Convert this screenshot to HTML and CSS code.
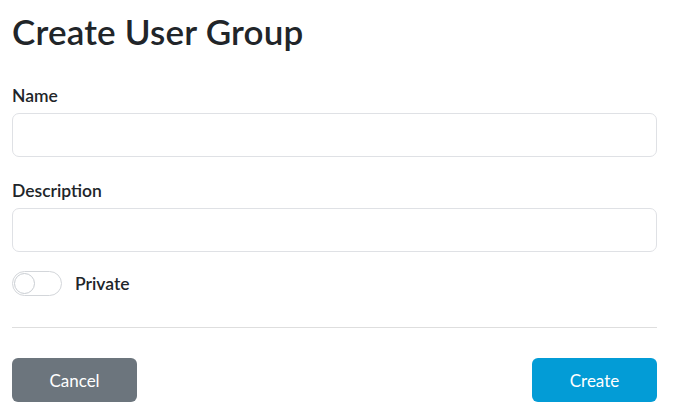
FILE: index.html
```html
<!DOCTYPE html>
<html>
<head>
<meta charset="utf-8">
<link rel="stylesheet" href="styles.css">
</head>
<body>
<div class="page">
  <h1 class="title">Create User Group</h1>
  <div class="field">
    <label class="label">Name</label>
    <input class="input" type="text">
  </div>
  <div class="field">
    <label class="label">Description</label>
    <input class="input" type="text">
  </div>
  <div class="switch-row">
    <span class="switch"><span class="knob"></span></span>
    <span class="switch-label">Private</span>
  </div>
  <hr class="divider">
  <div class="actions">
    <button class="btn btn-cancel">Cancel</button>
    <button class="btn btn-create">Create</button>
  </div>
</div>
</body>
</html>
```
FILE: styles.css
```css
* { box-sizing: border-box; }
html, body { margin: 0; padding: 0; background: #fff; }
body { font-family: Lato, "Open Sans", sans-serif; color: #212529; }
.page { width: 645px; margin-left: 12px; padding-top: 9px; }
.title { margin: 0; font-size: 35px; font-weight: 600; line-height: 44px; letter-spacing: 0.2px; }
.title + .field { margin-top: 32px; }
.field + .field { margin-top: 23px; }
.label { display: block; font-size: 17.5px; font-weight: 600; line-height: 22px; margin-bottom: 6px; }
.input { display: block; width: 100%; height: 44px; border: 1px solid #dfe1e5; border-radius: 7px; padding: 0 12px; font: inherit; outline: none; }
.switch-row { display: flex; align-items: center; gap: 13px; margin-top: 19px; }
.switch { position: relative; width: 50px; height: 25px; border: 1px solid #d3d6da; border-radius: 13px; background: #fff; }
.knob { position: absolute; left: 1px; top: 1px; width: 21px; height: 21px; border-radius: 50%; border: 1px solid #c9cdd2; background: #fff; }
.switch-label { font-size: 17.5px; font-weight: 600; }
.divider { border: 0; border-top: 1px solid #dedede; margin: 31px 0 0; }
.actions { display: flex; justify-content: space-between; margin-top: 30px; }
.btn { width: 125px; height: 44px; border: 0; border-radius: 6px; color: #fff; font-family: inherit; font-size: 17px; font-weight: 400; }
.btn-cancel { background: #6c757d; }
.btn-create { background: #039cd6; }
```
